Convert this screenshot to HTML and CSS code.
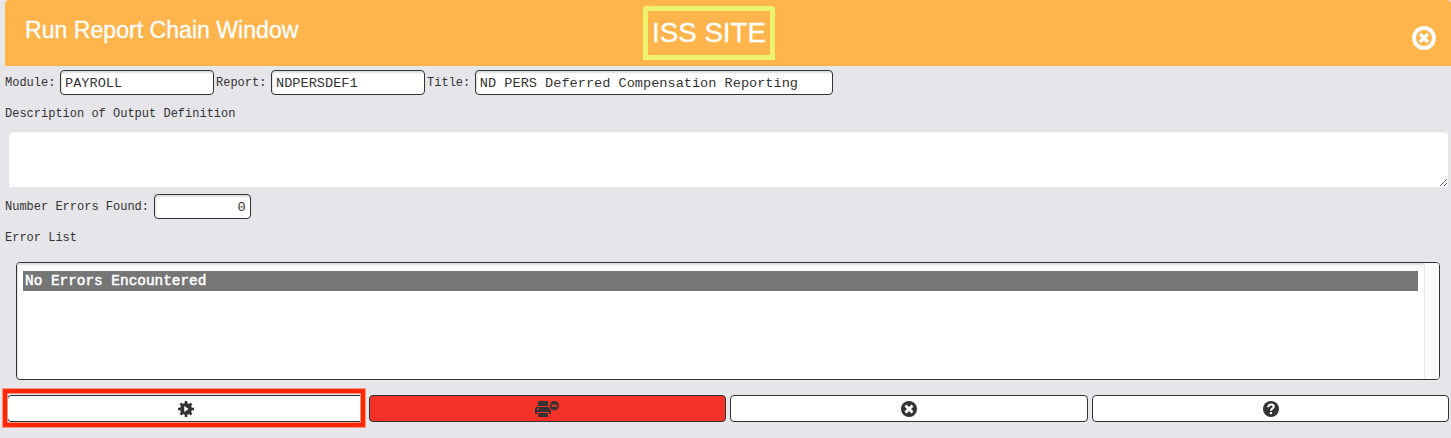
FILE: index.html
```html
<!DOCTYPE html>
<html lang="en">
<head>
    <meta charset="UTF-8">
    <title>Run Report Chain Window</title>
    <link rel="stylesheet" href="styles.css">
</head>
<body>
<div class="window">
    <div class="header">
        <h1>Run Report Chain Window</h1>
        <div class="site">ISS SITE</div>
        <svg class="close" viewBox="0 0 24 24">
            <circle cx="12" cy="12" r="10" fill="none" stroke="#fff" stroke-width="4"/>
            <path d="M8 8l8 8M16 8l-8 8" stroke="#fff" stroke-width="3.4"/>
        </svg>
    </div>
    <div class="row">
        <label for="module">Module:</label>
        <input id="module" type="text" value="PAYROLL">
        <label for="report">Report:</label>
        <input id="report" type="text" value="NDPERSDEF1">
        <label for="title">Title:</label>
        <input id="title" class="wide" type="text" value="ND PERS Deferred Compensation Reporting">
    </div>
    <label class="caption" for="desc">Description of Output Definition</label>
    <textarea id="desc"></textarea>
    <div class="row">
        <label for="errors">Number Errors Found:</label>
        <input id="errors" class="number" type="text" value="0">
    </div>
    <div class="caption list-caption">Error List</div>
    <div class="error-list">
        <ul>
            <li class="selected">No Errors Encountered</li>
        </ul>
        <div class="scrollbar"></div>
    </div>
    <div class="buttons">
        <button class="run" type="button">
            <svg width="16" height="16" viewBox="0 0 16 16">
                <path d="M8 0v16M0 8h16M2.5 2.5l11 11M13.5 2.5l-11 11" stroke="#333" stroke-width="2.6"/>
                <circle cx="8" cy="8" r="6" fill="#333"/>
                <path d="M6.2 5v6L10.6 8z" fill="#fff"/>
            </svg>
        </button>
        <button class="print" type="button">
            <svg width="24" height="16" viewBox="0 0 24 16">
                <path fill="#333" d="M3 0h10v5H3zM1.500 6h13Q16 6 16 7.500V13h-2v-2H2v2H0V7.500Q0 6 1.500 6zM3 12h10v4H3z"/>
                <path fill="#f43228" d="M2 7.500h2v1.500H2z"/>
                <circle cx="19.3" cy="4.7" r="5.6" fill="#f43228"/>
                <circle cx="19.3" cy="4.7" r="4.7" fill="#333"/>
                <path fill="#f43228" d="M16.5 3.7h5.600v2h-5.600z"/>
            </svg>
        </button>
        <button type="button">
            <svg width="16" height="16" viewBox="0 0 16 16">
                <circle cx="8" cy="8" r="8" fill="#333"/>
                <path d="M4.500 4.500l7 7M11.500 4.500l-7 7" stroke="#fff" stroke-width="3"/>
            </svg>
        </button>
        <button class="help" type="button">
            <svg width="16" height="16" viewBox="0 0 16 16">
                <circle cx="8" cy="8" r="8" fill="#333"/>
                <path d="M5.200 6.300C5.200 4.400 6.400 3.500 8 3.500s2.700.8 2.700 2.200C10.700 7.600 8 7.300 8 9.800" fill="none" stroke="#fff" stroke-width="2.1"/>
                <path d="M6.900 11h2.200v2.100H6.900z" fill="#fff"/>
            </svg>
        </button>
    </div>
</div>
</body>
</html>
```

FILE: styles.css
```css
* {
    box-sizing: border-box;
    margin: 0;
    padding: 0;
}

body {
    background: #e6e5ea;
    color: #333;
    font: 12px/18px "Liberation Mono", monospace;
}

.window {
    padding-left: 5px;
    padding-bottom: 16px;
}

.header {
    display: grid;
    grid-template-columns: 618px 132px 1fr;
    height: 66px;
    padding-left: 20px;
    padding-right: 15px;
    border-radius: 4px 4px 0 0;
    background: #ffb44c;
    color: #fff;
    font-family: "Liberation Sans", Arial, sans-serif;
    -webkit-text-stroke: .3px #fff;
}
.header h1 {
    padding-top: 16px;
    font-size: 23.1px;
    font-weight: normal;
    line-height: 28px;
}
.site {
    height: 54px;
    margin-top: 6px;
    border: 5px solid #edf46b;
    border-radius: 3px 3px 0 0;
    font-size: 27.7px;
    line-height: 43px;
    text-align: center;
}
.close {
    justify-self: end;
    width: 24px;
    height: 24px;
    margin-top: 26px;
}

.row {
    display: flex;
    align-items: center;
    height: 33px;
}
.row label {
    margin-right: 4.6px;
}
.row input {
    width: 154px;
    height: 25px;
    margin-right: 2px;
    padding: 1px 4px 0;
    border: 1px solid #333;
    border-radius: 4px;
    outline: none;
    box-shadow: inset 1px 2px 2px #ddd;
    background: #fff;
    color: #333;
    font: 13.6px "Liberation Mono", monospace;
}
.row input.wide {
    width: 358px;
}
.row input.number {
    width: 97px;
    text-align: right;
}

.caption {
    display: block;
    height: 31px;
    padding-top: 6px;
}
.list-caption {
    padding-top: 3px;
}

textarea {
    display: block;
    width: 1440px;
    height: 57px;
    margin-left: 3px;
    border: 0;
    border-radius: 4px 4px 0 0;
    box-shadow: inset 1px 2px 2px #ddd;
    background: #fff;
}
textarea + .row {
    height: 39px;
}

.error-list {
    display: flex;
    width: 1424px;
    height: 118px;
    margin: 5px 0 0 11px;
    border: 1px solid #333;
    border-radius: 4px;
    background: #fff;
    overflow: hidden;
}
.error-list ul {
    flex: 1;
    padding: 8px 6px;
    box-shadow: inset 1px 2px 2px #ddd;
    list-style: none;
}
.error-list li {
    height: 20px;
    padding-left: 2px;
    font-size: 14.4px;
    line-height: 20px;
}
.error-list .selected {
    background: #767676;
    color: #fff;
    -webkit-text-stroke: .5px #fff;
}
.scrollbar {
    width: 15px;
    border-left: 1px solid #e8e8e8;
    background: #fafafa;
}

.buttons {
    display: grid;
    grid-template-columns: repeat(4, 1fr);
    gap: 4px;
    margin: 15px 2px 0;
}
.buttons button {
    position: relative;
    display: flex;
    align-items: center;
    justify-content: center;
    height: 27px;
    border: 1px solid #333;
    border-radius: 4px;
    background: #fff;
}
/* red frame lying over the run button */
.buttons .run:after {
    content: "";
    box-sizing: border-box;
    position: absolute;
    top: -7px;
    left: -5px;
    width: 362px;
    height: 38px;
    border: 4px solid #ff2600;
    box-shadow: 0 0 0 1px #f3958a, inset 0 0 0 1px #f3958a;
}
.buttons .print {
    background: #f43228;
}
.buttons .help {
    padding-left: 1px;
}
```
